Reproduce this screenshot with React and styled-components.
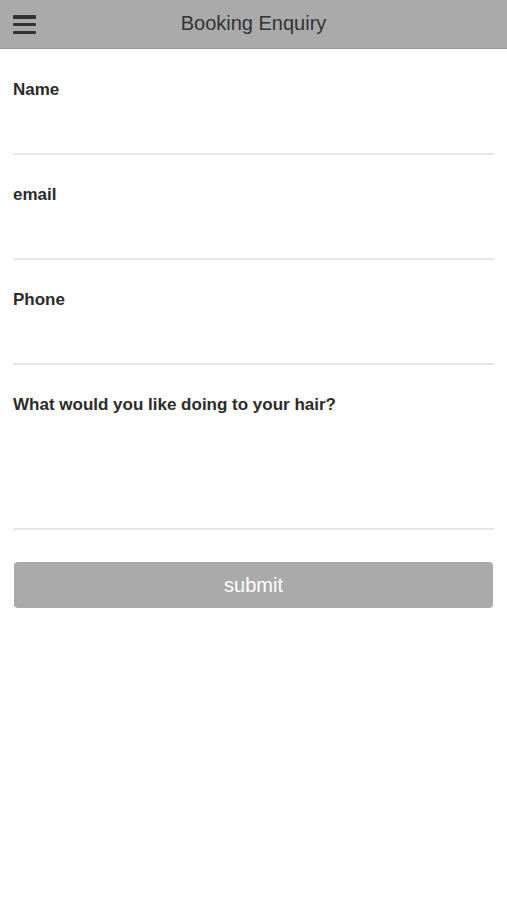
import React from "react";
import styled, { createGlobalStyle } from "styled-components";

const Global = createGlobalStyle`
  html, body { margin: 0; padding: 0; background: #fff; }
  body { font-family: "Liberation Sans", Arial, sans-serif; }
  * { box-sizing: border-box; }
`;

const Header = styled.header`
  position: relative;
  height: 49px;
  background: #aaaaaa;
  border-bottom: 1px solid #989898;
  display: flex;
  align-items: center;
  justify-content: center;
`;

const MenuButton = styled.button`
  position: absolute;
  left: 13px;
  top: 15px;
  width: 23px;
  height: 19px;
  padding: 0;
  border: 0;
  background: none;
  display: flex;
  flex-direction: column;
  justify-content: space-between;
`;

const Bar = styled.span`
  display: block;
  height: 3.5px;
  border-radius: 1px;
  background: #333;
`;

const Title = styled.h1`
  margin: 0;
  font-size: 20px;
  font-weight: normal;
  color: #333;
  line-height: 1;
  margin-top: -2px;
`;

const Form = styled.form`
  padding: 1px 13px 0;
  display: flex;
  flex-direction: column;
`;

const Field = styled.label`
  display: flex;
  flex-direction: column;
  padding-top: 30px;
`;

const Label = styled.span`
  font-size: 17px;
  font-weight: bold;
  color: #2b2b2b;
  line-height: 20px;
  height: 20px;
`;

const Input = styled.input`
  height: 55px;
  border: 0;
  border-bottom: 2px solid #e6e6e6;
  outline: none;
  background: transparent;
  font: inherit;
`;

const Area = styled.textarea`
  display: block;
  height: 115px;
  border: 0;
  border-bottom: 2px solid #e6e6e6;
  outline: none;
  resize: none;
  background: transparent;
  font: inherit;
`;

const Submit = styled.button`
  margin: 32px 1px 0;
  height: 46px;
  border: 0;
  border-radius: 4px;
  background: #aaaaaa;
  color: #fff;
  font-family: "Liberation Sans", Arial, sans-serif;
  font-size: 20px;
`;

export default function App() {
  return (
    <>
      <Global />
      <Header>
        <MenuButton type="button" aria-label="menu">
          <Bar />
          <Bar />
          <Bar />
        </MenuButton>
        <Title>Booking Enquiry</Title>
      </Header>
      <Form onSubmit={(e) => e.preventDefault()}>
        <Field>
          <Label>Name</Label>
          <Input />
        </Field>
        <Field>
          <Label>email</Label>
          <Input />
        </Field>
        <Field>
          <Label>Phone</Label>
          <Input />
        </Field>
        <Field>
          <Label>What would you like doing to your hair?</Label>
          <Area />
        </Field>
        <Submit type="submit">submit</Submit>
      </Form>
    </>
  );
}
